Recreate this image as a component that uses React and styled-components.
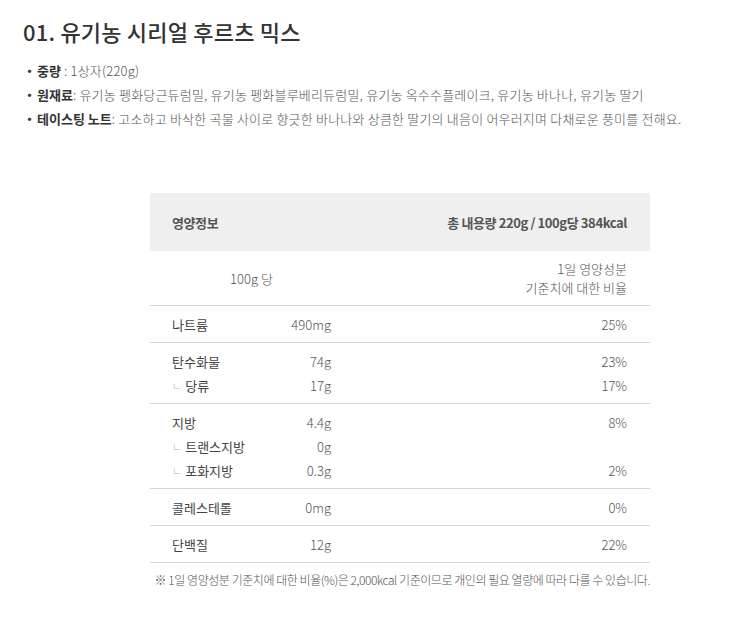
import React from "react";
import styled, { createGlobalStyle } from "styled-components";

const Global = createGlobalStyle`
  html, body { margin: 0; padding: 0; background: #fff; }
  body { font-family: "Noto Sans CJK KR", "Noto Sans", sans-serif; color: #555; }
`;

const Page = styled.div`
  padding: 14px 23px 0 23px;
`;

const Title = styled.h2`
  margin: 0;
  font-size: 22px;
  font-weight: 500;
  color: #333;
  line-height: 34px;
  letter-spacing: 0.2px;
`;

const InfoList = styled.ul`
  list-style: none;
  margin: 11px 0 0 0;
  padding: 0;
`;

const InfoItem = styled.li`
  font-size: 13px;
  line-height: 24px;
  color: #555;
  font-weight: 300;
  letter-spacing: 0.2px;
  &::before {
    content: "・";
    display: inline-block;
    width: 14px;
    color: #333;
    font-weight: 700;
    letter-spacing: 0;
  }
`;

const Label = styled.b`
  font-weight: 700;
  color: #333;
  letter-spacing: 0;
`;

const Nutrition = styled.div`
  width: 500px;
  margin: 62px 0 0 127px;
`;

const Head = styled.div`
  display: flex;
  justify-content: space-between;
  align-items: center;
  height: 58px;
  padding: 0 23px 0 22px;
  background: #efefef;
  font-size: 13px;
  font-weight: 700;
  color: #555;
  letter-spacing: -0.4px;
`;

const Group = styled.div`
  border-bottom: 1px solid #d6d6d6;
  padding: ${(p) => p.$pad || "7px 0 5px"};
`;

const Row = styled.div`
  display: grid;
  grid-template-columns: 100px 59px 1fr auto;
  padding: 0 23px 0 22px;
  font-size: 13px;
  line-height: ${(p) => p.$lh || "24px"};
  color: #555;
  font-weight: 300;
`;

const Name = styled.span`
  display: flex;
  align-items: center;
  color: #444;
  font-weight: 400;
`;

const Sub = styled.span`
  font-size: 10px;
  color: #aaa;
  margin-right: 4px;
  font-weight: 300;
`;

const Amount = styled.span`
  text-align: right;
`;

const Per = styled.span`
  grid-column: 4;
  text-align: right;
`;

const Basis = styled.span`
  grid-column: 1 / span 2;
  text-align: center;
  align-self: center;
`;

const Note = styled.p`
  width: 500px;
  margin: 8px 0 0 127px;
  font-size: 12px;
  font-weight: 300;
  color: #555;
  letter-spacing: -0.45px;
  white-space: nowrap;
  text-align: right;
`;

const groups = [
  [["나트륨", "490mg", "25%"]],
  [
    ["탄수화물", "74g", "23%"],
    ["당류", "17g", "17%", true],
  ],
  [
    ["지방", "4.4g", "8%"],
    ["트랜스지방", "0g", "", true],
    ["포화지방", "0.3g", "2%", true],
  ],
  [["콜레스테롤", "0mg", "0%"]],
  [["단백질", "12g", "22%"]],
];

export default function App() {
  return (
    <Page>
      <Global />
      <Title>01. 유기농 시리얼 후르츠 믹스</Title>
      <InfoList>
        <InfoItem>
          <Label>중량</Label> : 1상자(220g)
        </InfoItem>
        <InfoItem>
          <Label>원재료</Label>: 유기농 펭화당근듀럼밀, 유기농 펭화블루베리듀럼밀, 유기농 옥수수플레이크, 유기농 바나나, 유기농 딸기
        </InfoItem>
        <InfoItem>
          <Label>테이스팅 노트</Label>: 고소하고 바삭한 곡물 사이로 향긋한 바나나와 상큼한 딸기의 내음이 어우러지며 다채로운 풍미를 전해요.
        </InfoItem>
      </InfoList>
      <Nutrition>
        <Head>
          <span>영양정보</span>
          <span>총 내용량 220g / 100g당 384kcal</span>
        </Head>
        <Group $pad="8px 0">
          <Row $lh="19px">
            <Basis>100g 당</Basis>
            <Per>
              1일 영양성분
              <br />
              기준치에 대한 비율
            </Per>
          </Row>
        </Group>
        {groups.map((g, i) => (
          <Group key={i}>
            {g.map(([n, a, p, sub]) => (
              <Row key={n}>
                <Name>
                  {sub && <Sub>ㄴ</Sub>}
                  {n}
                </Name>
                <Amount>{a}</Amount>
                <Per>{p}</Per>
              </Row>
            ))}
          </Group>
        ))}
      </Nutrition>
      <Note>※ 1일 영양성분 기준치에 대한 비율(%)은 2,000kcal 기준이므로 개인의 필요 열량에 따라 다를 수 있습니다.</Note>
    </Page>
  );
}
